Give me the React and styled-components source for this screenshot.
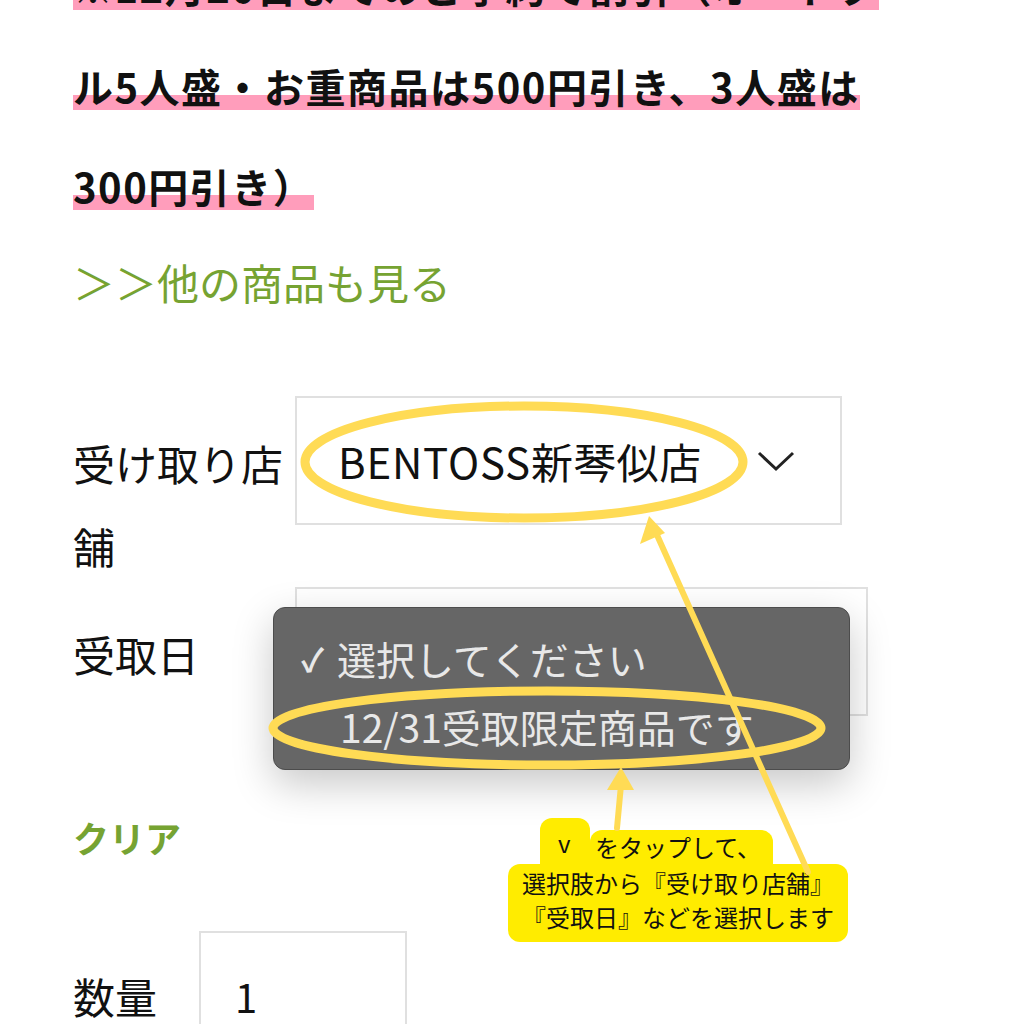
import React from 'react';
import styled, { createGlobalStyle } from 'styled-components';

const GlobalStyle = createGlobalStyle`
   html, body {
      margin: 0;
      padding: 0;
      background: #ffffff;
   }
   body {
      font-family: 'Noto Sans CJK JP', 'Noto Sans', sans-serif;
      color: #111111;
      overflow: hidden;
   }
`;

const Page = styled.div`
   position: relative;
   width: 1024px;
   height: 1024px;
   overflow: hidden;
   box-sizing: border-box;
   padding-left: 73px;
`;

const Notice = styled.p`
   margin: -64px 0 0 0;
   width: 860px;
   font-size: 40px;
   font-weight: 700;
   line-height: 100px;
   letter-spacing: 1.5px;
`;

const Marker = styled.span`
   background: linear-gradient(
      transparent 65%,
      #ff9dbb 65%,
      #ff9dbb 91%,
      transparent 91%
   );
`;

const MoreLink = styled.a`
   display: block;
   margin-top: 16px;
   font-size: 42px;
   line-height: 60px;
   color: #76a332;
   text-decoration: none;
`;

const Form = styled.div`
   position: relative;
   margin-top: 84px;
`;

const Row = styled.div`
   display: flex;
   align-items: ${(p) => (p.$center ? 'center' : 'flex-start')};
`;

const Label = styled.div`
   flex: none;
   width: ${(p) => p.$width || 222}px;
   padding-top: ${(p) => (p.$center ? 0 : 25)}px;
   font-size: 42px;
   line-height: 83px;
   color: #111;
`;

const Select = styled.div`
   flex: none;
   box-sizing: border-box;
   width: ${(p) => p.$width}px;
   height: 129px;
   border: 2px solid #e0e0e0;
   display: flex;
   align-items: center;
   justify-content: space-between;
   padding: 0 45px 0 41px;
   font-size: 42px;
   letter-spacing: 0.8px;
   color: #111;
`;

const Chevron = () => (
   <svg width='38' height='22' viewBox='0 0 38 22'>
      <polyline points='2,3 19,19 36,3' fill='none' stroke='#222' strokeWidth='3' />
   </svg>
);

const Menu = styled.div`
   position: absolute;
   left: 200px;
   top: 211px;
   width: 577px;
   height: 163px;
   box-sizing: border-box;
   padding: 16px 0 0 27px;
   background: #666666;
   border: 1px solid #4c4c4c;
   border-radius: 12px;
   box-shadow: 0 14px 40px rgba(0, 0, 0, 0.22);
`;

const MenuItem = styled.div`
   display: flex;
   align-items: center;
   height: 68px;
   font-size: 39px;
   color: #e8e8e8;
   .check {
      width: ${(p) => (p.$checked ? 36 : 39)}px;
      font-size: 32px;
      font-weight: 700;
   }
`;

const Clear = styled.div`
   margin-top: 96px;
   font-size: 36px;
   font-weight: 700;
   line-height: 50px;
   color: #76a332;
`;

const QtyRow = styled(Row)`
   margin-top: 69px;
`;

const QtyInput = styled.div`
   box-sizing: border-box;
   width: 208px;
   height: 129px;
   border: 2px solid #e0e0e0;
   padding-left: 34px;
   display: flex;
   align-items: center;
   font-size: 40px;
   line-height: 50px;
`;

const Overlay = styled.svg`
   position: absolute;
   left: 0;
   top: 0;
   pointer-events: none;
`;

const Callout = styled.div`
   position: absolute;
   left: 508px;
   top: 818px;
   width: 340px;
   font-size: 24px;
   color: #111;
`;

const Tab = styled.div`
   display: flex;
   align-items: flex-end;
   margin-left: 32px;
   height: 46px;
`;

const TabPart = styled.div`
   background: #ffec00;
   height: ${(p) => p.$h}px;
   width: ${(p) => p.$w}px;
   border-radius: 12px 12px 0 0;
   display: flex;
   align-items: center;
   box-sizing: border-box;
   padding: ${(p) => p.$pad || '0'};
   line-height: 34px;
   white-space: nowrap;
`;

const CalloutBody = styled.div`
   background: #ffec00;
   border-radius: 12px;
   padding: 2px 0 8px;
   text-align: center;
   line-height: 34px;
`;

const Annotations = () => (
   <Overlay width='1024' height='1024' viewBox='0 0 1024 1024'>
      <g fill='none' stroke='#ffdb55' strokeWidth='9'>
         <ellipse cx='524' cy='462' rx='219' ry='56' />
         <ellipse cx='547' cy='728' rx='274' ry='37' />
      </g>
      <g stroke='#ffdb55' strokeWidth='6' strokeLinecap='round'>
         <line x1='617' y1='828' x2='621' y2='785' />
         <line x1='808' y1='872' x2='657' y2='535' />
      </g>
      <g fill='#ffdb55'>
         <polygon points='621,767 607,790 634,790' />
         <polygon points='649,516 640,544 665,533' />
      </g>
   </Overlay>
);

const App = () => {
   return (
      <>
         <GlobalStyle />
         <Page>
            <Notice>
               <Marker>
                  ※12月20日までのご予約で割引（オードブ
                  <br />
                  ル5人盛・お重商品は500円引き、3人盛は
                  <br />
                  300円引き）
               </Marker>
            </Notice>
            <MoreLink href='#'>＞＞他の商品も見る</MoreLink>

            <Form>
               <Row>
                  <Label>受け取り店舗</Label>
                  <Select $width={547}>
                     <span>BENTOSS新琴似店</span>
                     <Chevron />
                  </Select>
               </Row>
               <Row>
                  <Label>受取日</Label>
                  <Select $width={573}>
                     <span />
                     <Chevron />
                  </Select>
               </Row>

               <Menu>
                  <MenuItem $checked>
                     <span className='check'>✓</span>
                     <span>選択してください</span>
                  </MenuItem>
                  <MenuItem>
                     <span className='check' />
                     <span>12/31受取限定商品です</span>
                  </MenuItem>
               </Menu>
            </Form>

            <Clear>クリア</Clear>

            <QtyRow $center>
               <Label $center $width={126}>
                  数量
               </Label>
               <QtyInput>1</QtyInput>
            </QtyRow>

            <Callout>
               <Tab>
                  <TabPart $w={50} $h={46} $pad='4px 0 0 18px'>
                     v
                  </TabPart>
                  <TabPart $w={183} $h={34} $pad='0 0 0 5px'>
                     をタップして、
                  </TabPart>
               </Tab>
               <CalloutBody>
                  選択肢から『受け取り店舗』
                  <br />
                  『受取日』などを選択します
               </CalloutBody>
            </Callout>

            <Annotations />
         </Page>
      </>
   );
};

export default App;
